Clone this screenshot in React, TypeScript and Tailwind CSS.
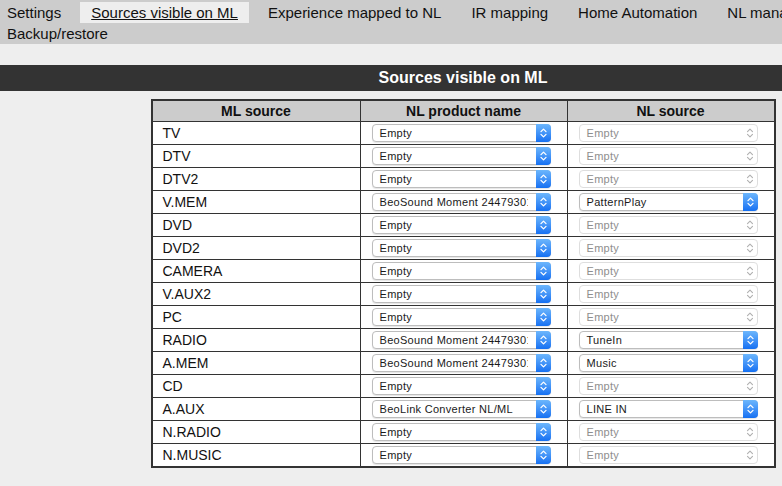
import React from "react";

const font = { fontFamily: '"Liberation Sans", Arial, Helvetica, sans-serif' };

const navTop = [
  "Settings",
  "Sources visible on ML",
  "Experience mapped to NL",
  "IR mapping",
  "Home Automation",
  "NL management",
];

const rows: [string, string, string][] = [
  ["TV", "", ""],
  ["DTV", "", ""],
  ["DTV2", "", ""],
  ["V.MEM", "BeoSound Moment 24479301", "PatternPlay"],
  ["DVD", "", ""],
  ["DVD2", "", ""],
  ["CAMERA", "", ""],
  ["V.AUX2", "", ""],
  ["PC", "", ""],
  ["RADIO", "BeoSound Moment 24479301", "TuneIn"],
  ["A.MEM", "BeoSound Moment 24479301", "Music"],
  ["CD", "", ""],
  ["A.AUX", "BeoLink Converter NL/ML", "LINE IN"],
  ["N.RADIO", "", ""],
  ["N.MUSIC", "", ""],
];

function BlueArrows() {
  return (
    <div className="-my-px -mr-px flex h-[18px] w-[15px] shrink-0 items-center justify-center rounded-r-[4px] bg-linear-to-b from-[#6cb6fc] to-[#1470f2]">
      <svg width="15" height="18" viewBox="0 0 15 18" fill="none">
        <path d="M5 7.6 L7.5 5.1 L10 7.6" stroke="white" strokeWidth="1.3" strokeLinecap="round" strokeLinejoin="round" />
        <path d="M5 10.4 L7.5 12.9 L10 10.4" stroke="white" strokeWidth="1.3" strokeLinecap="round" strokeLinejoin="round" />
      </svg>
    </div>
  );
}

function GreyArrows() {
  return (
    <div className="flex h-[16px] w-[14px] shrink-0 items-center justify-center">
      <svg width="14" height="16" viewBox="0 0 14 16" fill="none">
        <path d="M4.5 6.6 L7 4.1 L9.5 6.6" stroke="#b0b0b0" strokeWidth="1.1" strokeLinecap="round" strokeLinejoin="round" />
        <path d="M4.5 9.4 L7 11.9 L9.5 9.4" stroke="#b0b0b0" strokeWidth="1.1" strokeLinecap="round" strokeLinejoin="round" />
      </svg>
    </div>
  );
}

function Select({ value, disabled }: { value: string; disabled?: boolean }) {
  return (
    <div
      className={`flex h-[18px] w-[179px] items-center rounded-[4px] border bg-white ${
        disabled
          ? "border-[#dedede] text-[#8e8e8e]"
          : "border-[#bdbdbd] text-[#1a1a1a] shadow-[0_1px_1px_rgba(0,0,0,0.1)]"
      }`}
    >
      <span className="mr-[8px] flex-1 overflow-hidden whitespace-nowrap pl-[7px] text-[11px] leading-[16px] tracking-[0.3px]">
        {value}
      </span>
      {disabled ? <GreyArrows /> : <BlueArrows />}
    </div>
  );
}

export default function App() {
  return (
    <div className="h-screen w-full overflow-hidden bg-[#eeeeee]" style={font}>
      <div className="w-[926px]">
        {/* Top nav */}
        <div className="h-[44px] bg-[#cccccc] pt-[2px] text-[15px] leading-[21px] text-[#111]">
          <div className="-ml-[4px] flex h-[21px] gap-[8px] whitespace-nowrap">
            {navTop.map((n) => (
              <span
                key={n}
                className={`px-[11px] ${n === "Sources visible on ML" ? "bg-[#eeeeee] underline" : ""}`}
              >
                {n}
              </span>
            ))}
          </div>
          <div className="-ml-[4px] flex h-[21px]">
            <span className="px-[11px]">Backup/restore</span>
          </div>
        </div>

        <div className="mt-[21px] h-[26px] bg-[#333333] text-center text-[16px] font-bold leading-[26px] text-white">
          Sources visible on ML
        </div>

        {/* Table */}
        <div className="mx-auto mt-[8px] w-[625px] border-2 border-[#333333] bg-white text-[14px] text-[#111]">
          <div className="grid h-[20px] grid-cols-3 bg-[#cccccc] font-bold leading-[20px]">
            <div className="text-center">ML source</div>
            <div className="border-l border-[#333333] text-center">NL product name</div>
            <div className="border-l border-[#333333] text-center">NL source</div>
          </div>
          {rows.map(([src, product, nlSource]) => (
            <div key={src} className="grid h-[23px] grid-cols-3 border-t border-[#333333]">
              <div className="flex items-center pl-[10px]">{src}</div>
              <div className="flex items-center border-l border-[#333333] pl-[11px]">
                <Select value={product || "Empty"} />
              </div>
              <div className="flex items-center border-l border-[#333333] pl-[11px]">
                <Select value={nlSource || "Empty"} disabled={!nlSource} />
              </div>
            </div>
          ))}
        </div>
      </div>
    </div>
  );
}
